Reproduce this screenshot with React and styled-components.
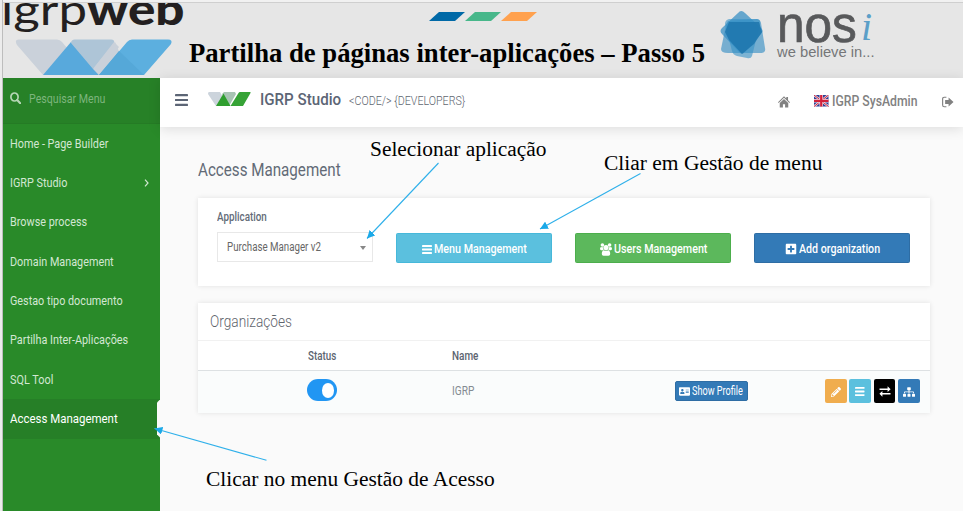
import React, { useLayoutEffect, useRef, useState } from "react";
import styled, { createGlobalStyle } from "styled-components";
import { FaPencilAlt, FaSitemap, FaPlusSquare, FaAddressCard } from "react-icons/fa";

const Global = createGlobalStyle`
  * { box-sizing: border-box; }
  html, body { margin: 0; padding: 0; overflow: hidden; }
  body { font-family: Roboto, "Liberation Sans", sans-serif; }
`;

/* ---------- text fitted to a given width ---------- */
const FitBox = styled.span`
  display: inline-block;
  flex: none;
  white-space: nowrap;
  width: ${(p) => p.$w}px;
`;
const FitInner = styled.span`
  display: inline-block;
  transform-origin: 0 50%;
`;
function Fit({ w, children }) {
  const ref = useRef(null);
  const [k, setK] = useState(1);
  useLayoutEffect(() => {
    setK(w / ref.current.offsetWidth);
  }, [w]);
  return (
    <FitBox $w={w}>
      <FitInner ref={ref} style={{ transform: `scaleX(${k})` }}>{children}</FitInner>
    </FitBox>
  );
}

/* ---------- frame ---------- */
const Frame = styled.div`
  position: relative;
  width: 963px;
  height: 511px;
  padding-left: 2px;
  background: #ececec;
  overflow: hidden;
`;
const Slide = styled.div`
  height: 511px;
  border-left: 1px solid #bdbdbd;
  padding-top: 2px;
  background: #f1f1f1;
`;

/* ---------- slide header ---------- */
const SlideHeader = styled.header`
  display: grid;
  grid-template-columns: 186px 531px 1fr;
  height: 76px;
  border-top: 1px solid #cfcfcf;
  background: #e6e6e6;
`;
const BrandColumn = styled.div`
  height: 75px;
  overflow: hidden;
`;
const Wordmark = styled.div`
  height: 36px;
  overflow: hidden;
  font-family: Lato, sans-serif;
  font-size: 43px;
  line-height: 42px;
  color: #231f20;
  white-space: nowrap;
`;
const WordmarkLine = styled.div`
  display: flex;
  margin: -15px 0 0 -2px;
`;
const Light = styled.span`
  font-weight: 400;
`;
const Heavy = styled.span`
  font-weight: 900;
`;
const BrandShape = styled.svg`
  display: block;
  margin-left: 12px;
`;
const TitleColumn = styled.div`
  display: flex;
  flex-direction: column;
`;
const Stripes = styled.svg`
  display: block;
  margin: 9px 0 0 240px;
`;
const SlideTitle = styled.h1`
  margin: 16px 0 0 0;
  font: bold 27px/32px "Liberation Serif", serif;
  color: #000;
`;
const Nosi = styled.div`
  display: flex;
`;
const NosiStar = styled.svg`
  margin: 7px 0 0 0;
  flex: none;
`;
const NosiText = styled.div`
  margin-left: 11px;
  color: #58595b;
  font-family: "Liberation Sans", sans-serif;
`;
const NosiName = styled.div`
  display: flex;
  height: 41px;
  font-size: 52px;
  line-height: 41px;
  padding-top: 1px;
  -webkit-text-stroke: 0.7px #58595b;
`;
const NosiI = styled.span`
  margin: 4px 0 0 4px;
  font: italic 40px/38px "Liberation Serif", serif;
  color: #5b9fc8;
  -webkit-text-stroke: 0;
`;
const Tagline = styled.div`
  font-size: 15.5px;
  line-height: 16px;
  color: #757678;
`;

/* ---------- application ---------- */
const AppBody = styled.div`
  display: grid;
  grid-template-columns: 157px 1fr;
  height: 433px;
`;
const Sidebar = styled.nav`
  background: #298a29;
  color: #d2e7d2;
  font-size: 13px;
`;
const Search = styled.div`
  display: flex;
  align-items: center;
  gap: 8px;
  height: 46px;
  padding: 0 0 5px 7px;
  background: #278127;
  color: #7db57d;
  border-bottom: 1px solid #257b25;
`;
const MenuItem = styled.div`
  display: flex;
  align-items: center;
  justify-content: space-between;
  height: 39.35px;
  padding: 0 11px 1px 7.2px;
  background: ${(p) => (p.$active ? "#267f27" : "transparent")};
  color: ${(p) => (p.$active ? "#fff" : "inherit")};
`;
const ActiveItem = styled(MenuItem)`
  padding-right: 0;
`;
const Notch = styled.span`
  width: 3px;
  height: 38px;
  background: #fafafa;
  clip-path: polygon(0 3px, 100% 0, 100% 100%, 0 calc(100% - 3px));
`;
const Main = styled.main`
  background: #fafafa;
`;
const Topbar = styled.header`
  display: flex;
  align-items: center;
  height: 49px;
  padding: 0 9.5px 5px 15px;
  background: #fff;
  box-shadow: 0 2px 12px rgba(0, 0, 0, 0.12);
  color: #777;
`;
const MenuToggle = styled.span`
  display: flex;
  margin-bottom: 1px;
`;
const AppLogo = styled.svg`
  margin: 0 0 2px 19.5px;
`;
const AppName = styled.div`
  margin: -2px 0 0 9px;
  font-size: 17px;
  font-weight: 500;
  color: #5c6575;
`;
const AppSub = styled.div`
  margin: 0 0 0 8px;
  font-size: 13px;
  font-weight: 300;
  color: #60666f;
`;
const TopRight = styled.div`
  display: flex;
  align-items: center;
  margin-left: auto;
  padding-top: 3px;
  color: #818181;
`;
const UserBox = styled.div`
  display: flex;
  align-items: center;
  gap: 3px;
  margin: -1px 25px 0 24.5px;
  font-size: 14px;
  font-weight: 500;
`;
const Content = styled.div`
  padding: 32px 33px 0 38.4px;
`;
const PageTitle = styled.h2`
  height: 39px;
  margin: 0;
  font-size: 17.5px;
  font-weight: 400;
  line-height: 22px;
  color: #626a76;
`;
const Card = styled.section`
  background: #fff;
  box-shadow: 0 0 5px rgba(0, 0, 0, 0.1);
`;
const FilterCard = styled(Card)`
  display: grid;
  grid-template-columns: repeat(4, 156px);
  column-gap: 23px;
  align-items: start;
  height: 88px;
  padding: 11px 19px 0;
`;
const Label = styled.div`
  height: 23px;
  padding-top: 1px;
  font-size: 12px;
  font-weight: 500;
  line-height: 15px;
  color: #636b78;
`;
const Select = styled.div`
  display: flex;
  align-items: center;
  justify-content: space-between;
  height: 29.5px;
  padding: 0 6px 0 9px;
  border: 1px solid #e8e8e8;
  font-size: 12px;
  color: #666;
`;
const Caret = styled.span`
  margin-top: 2px;
  border: 3px solid transparent;
  border-top: 4.5px solid #888;
  border-bottom: 0;
`;
const Action = styled.button`
  display: flex;
  align-items: center;
  justify-content: center;
  gap: 2.5px;
  height: 30px;
  margin-top: 24px;
  padding: 0;
  border: 1px solid ${(p) => p.$edge};
  border-radius: 1.5px;
  background: ${(p) => p.$bg};
  color: #fff;
  font: 500 13px Roboto, sans-serif;
`;
const ActionIcon = styled.span`
  display: flex;
  margin-top: 2px;
  font-size: 12px;
`;
const OrgCard = styled(Card)`
  height: 110px;
  margin-top: 17px;
`;
const OrgTitle = styled.div`
  height: 38px;
  padding: 7px 0 0 11.5px;
  border-bottom: 1px solid #f1f1f1;
  font-size: 17px;
  font-weight: 300;
  line-height: 22px;
  color: #5f656d;
`;
const Row = styled.div`
  display: grid;
  grid-template-columns: 253.6px 223px 150px 1fr;
  align-items: center;
`;
const HeadRow = styled(Row)`
  height: 30px;
  border-bottom: 1px solid #dde1e3;
  font-size: 12px;
  font-weight: 500;
  color: #5c6470;
`;
const DataRow = styled(Row)`
  height: 42px;
  padding-bottom: 2px;
  background: #fafcfc;
  font-size: 12px;
  color: #848b92;
`;
const StatusCell = styled.div`
  margin-top: ${(p) => p.$lift ?? 0}px;
  padding-left: ${(p) => p.$pad}px;
`;
const Toggle = styled.div`
  display: flex;
  align-items: center;
  justify-content: flex-end;
  width: 30.5px;
  height: 22px;
  padding-right: 3px;
  border-radius: 11px;
  background: #2196f3;
`;
const Knob = styled.span`
  width: 12.5px;
  height: 15px;
  border-radius: 50%;
  background: #fff;
`;
const Profile = styled.button`
  display: flex;
  align-items: center;
  gap: 2.5px;
  width: 73px;
  height: 20px;
  padding: 0 0 0 3px;
  border: 1px solid #2e6da4;
  border-radius: 2px;
  background: #337ab7;
  color: #fff;
  font: 12px Roboto, sans-serif;
`;
const Tools = styled.div`
  display: flex;
  gap: 2.8px;
`;
const Tool = styled.button`
  display: flex;
  align-items: center;
  justify-content: center;
  width: 21.6px;
  height: 24px;
  padding: 1px 0 0;
  border: 0;
  border-radius: 2px;
  background: ${(p) => p.$bg};
  color: #fff;
  font-size: 11px;
`;

/* ---------- slide annotations ---------- */
const Note = styled.div`
  position: absolute;
  left: ${(p) => p.$x}px;
  top: ${(p) => p.$y}px;
  font: 20.5px/24px "Liberation Serif", serif;
  color: #000;
`;
const Arrows = styled.svg`
  position: absolute;
  left: 0;
  top: 0;
  pointer-events: none;
`;

/* ---------- drawings ---------- */
const Bars = ({ w, h, t, color = "currentColor" }) => (
  <svg width={w} height={h} viewBox={`0 0 ${w} ${h}`} fill={color}>
    {[0, 1, 2].map((i) => (
      <rect key={i} y={(i * (h - t)) / 2} width={w} height={t} rx="0.4" />
    ))}
  </svg>
);
const SearchIcon = () => (
  <svg width="11" height="12" viewBox="0 0 11 12" fill="none" stroke="#b5d6b5">
    <ellipse cx="4.5" cy="5" rx="3.6" ry="4" strokeWidth="1.7" />
    <path d="M7.2 8 10.2 11.2" strokeWidth="2.1" strokeLinecap="round" />
  </svg>
);
const HomeIcon = () => (
  <svg width="12" height="12" viewBox="0 0 11 11" fill="currentColor">
    <path d="M5.5 0.3 7.6 2.4V1H9.2V3.9L11 5.7 10.4 6.4 5.5 1.7 0.6 6.4 0 5.7Z" />
    <path d="M5.5 2.7 9.4 6.4V10.6H6.5V7.5H4.5V10.6H1.6V6.4Z" />
  </svg>
);
const SignOut = () => (
  <svg width="11.5" height="12" viewBox="0 0 11 11" fill="currentColor">
    <path d="M4.2 1H2.1Q.6 1 .6 2.7V8.3Q.6 10 2.1 10H4.2" fill="none" stroke="currentColor" strokeWidth="1.1" />
    <path d="M3 3.6H6.3V1.1L11 5.5 6.3 9.9V7.4H3Z" />
  </svg>
);
const Flag = () => (
  <svg width="14.5" height="11.5" viewBox="0 0 29 23">
    <rect width="29" height="23" fill="#2c3f94" />
    <path d="M0 0 29 23M29 0 0 23" stroke="#e6d8e6" strokeWidth="4.4" />
    <path d="M0 0 29 23M29 0 0 23" stroke="#d2283c" strokeWidth="2" />
    <path d="M14.5 0V23M0 11.5H29" stroke="#f0e0ea" strokeWidth="7" />
    <path d="M14.5 0V23M0 11.5H29" stroke="#d2203a" strokeWidth="4.5" />
  </svg>
);
const UsersIcon = () => (
  <svg width="12" height="13" viewBox="0 0 12 13" fill="currentColor">
    <circle cx="2.4" cy="2" r="1.8" />
    <circle cx="9.6" cy="2" r="1.8" />
    <circle cx="6" cy="4.6" r="2.6" />
    <path d="M1.2 4Q2.2 4.5 3 4.1 2.8 6 3.8 7.2H1.2Q0 7.2 0 5.8 0 4 1.2 4ZM10.8 4Q9.8 4.5 9 4.1 9.2 6 8.2 7.2H10.8Q12 7.2 12 5.8 12 4 10.8 4Z" />
    <path d="M3.7 7.2Q6 8.2 8.3 7.2 10.2 7.7 10.2 11 10.2 12.8 8.5 12.8H3.5Q1.8 12.8 1.8 11 1.8 7.7 3.7 7.2Z" />
  </svg>
);
const Exchange = () => (
  <svg width="12" height="11" viewBox="0 0 12 11" fill="currentColor">
    <path d="M.5 2.5H8.6V.3L11.6 3.3 8.6 6.1V4.1H.5ZM11.5 7H3.4V4.9L.4 7.8 3.4 10.7V8.6H11.5Z" />
  </svg>
);

const menu = [
  ["Home - Page Builder", 98.5],
  ["IGRP Studio", 57.5],
  ["Browse process", 77.5],
  ["Domain Management", 104],
  ["Gestao tipo documento", 113],
  ["Partilha Inter-Aplicações", 118.5],
  ["SQL Tool", 43.5],
];
const arrowLines = [
  [438.5, 163, 367, 238.5],
  [640.5, 173.5, 540, 229],
  [266.5, 460.3, 154.5, 428.5],
];

export default function App() {
  return (
    <Frame>
      <Global />
      <Slide>
        <SlideHeader>
          <BrandColumn>
            <Wordmark>
              <WordmarkLine>
                <Fit w={85.5}><Light>igrp</Light></Fit>
                <Fit w={97.5}><Heavy>web</Heavy></Fit>
              </WordmarkLine>
            </Wordmark>
            <BrandShape width="158" height="36" viewBox="0 0 158 36">
              <path d="M4 .5H42Q45 .5 47 3L75 36H28L2 6Q-1 .5 4 .5Z" fill="#cad1da" />
              <path d="M114 36H84L76 29 100 3Z" fill="#cad1da" />
              <path d="M28 36 56 3 84 36Z" fill="#58a9dc" />
              <path d="M60 .5H96Q100 .5 99 4L78 30 56 4Q56 .5 60 .5Z" fill="#aec5d7" />
              <path d="M99 3 104 8 84 36 78 30Z" fill="#cad1da" />
              <path d="M84 36 112 3Q114 .5 117 .5H153Q158 .5 156 5L129 36Z" fill="#5cafdf" />
              <path d="M84 36 104 12 129 36Z" fill="#55a8d8" />
            </BrandShape>
          </BrandColumn>
          <TitleColumn>
            <Stripes width="108" height="9" viewBox="0 0 108 9">
              <path d="M10 0H36L26 9H0Z" fill="#0069a7" />
              <path d="M46 0H72L62 9H36Z" fill="#47b78a" />
              <path d="M82 0H108L98 9H72Z" fill="#ffa14e" />
            </Stripes>
            <SlideTitle><Fit w={515.5}>Partilha de páginas inter-aplicações – Passo 5</Fit></SlideTitle>
          </TitleColumn>
          <Nosi>
            <NosiStar width="46" height="49" viewBox="0 0 46 49">
              <path d="M18 3Q21 -1 25 3L41 18Q44 21 41 24L25 42Q22 45 19 42L2 24Q-1 21 2 18Z" fill="#4d9ac8" opacity=".85" />
              <path d="M8 11 37 9Q40 9 41 13L45 38Q46 42 42 43L8 43Q1 43 1 39L6 15Z" fill="#3a90c5" opacity=".65" />
              <path d="M9 9 37 9Q41 10 40 14L32 46Q31 49 27 48L17 46Q13 45 12 41L5 14Q5 10 9 9Z" fill="#3691c7" opacity=".6" />
              <path d="M9 12 39 12 42 22 34 34 22 44 9 30 5 22Z" fill="#1d76ad" opacity=".85" />
            </NosiStar>
            <NosiText>
              <NosiName>
                <Fit w={80}>nos</Fit>
                <NosiI>i</NosiI>
              </NosiName>
              <Tagline><Fit w={98}>we believe in...</Fit></Tagline>
            </NosiText>
          </Nosi>
        </SlideHeader>

        <AppBody>
          <Sidebar>
            <Search>
              <SearchIcon />
              <Fit w={76}>Pesquisar Menu</Fit>
            </Search>
            {menu.map(([label, w], i) => (
              <MenuItem key={label}>
                <Fit w={w}>{label}</Fit>
                {i === 1 && (
                  <svg width="5" height="8" viewBox="0 0 5 8" fill="none" stroke="#d2e7d2" strokeWidth="1.2">
                    <path d="M1 .7 4 4 1 7.3" />
                  </svg>
                )}
              </MenuItem>
            ))}
            <ActiveItem $active>
              <Fit w={107.5}>Access Management</Fit>
              <Notch />
            </ActiveItem>
          </Sidebar>

          <Main>
            <Topbar>
              <MenuToggle><Bars w={13} h={12} t={2.2} color="#5c6575" /></MenuToggle>
              <AppLogo width="43" height="14" viewBox="0 0 43 14">
                <path d="M1 0H12L20 14H8L0 2Q0 0 1 0Z" fill="#ccd4dc" />
                <path d="M16 0H27L28 2 21 14 14 2Z" fill="#a8c4b4" />
                <path d="M8 14 15.5 1.5 22.5 14Z" fill="#2f9e2f" />
                <path d="M22.5 14 30.5 1Q31 0 32 0H42Q43 0 42.5 1L35 14Z" fill="#36a336" />
              </AppLogo>
              <AppName><Fit w={81}>IGRP Studio</Fit></AppName>
              <AppSub><Fit w={116}>{"<CODE/> {DEVELOPERS}"}</Fit></AppSub>
              <TopRight>
                <HomeIcon />
                <UserBox>
                  <Flag />
                  <Fit w={85.5}>IGRP SysAdmin</Fit>
                </UserBox>
                <SignOut />
              </TopRight>
            </Topbar>
            <Content>
              <PageTitle><Fit w={143}>Access Management</Fit></PageTitle>
              <FilterCard>
                <div>
                  <Label><Fit w={50}>Application</Fit></Label>
                  <Select>
                    <Fit w={94}>Purchase Manager v2</Fit>
                    <Caret />
                  </Select>
                </div>
                <Action $bg="#5bc0de" $edge="#46b8da">
                  <ActionIcon><Bars w={10} h={9} t={2} /></ActionIcon>
                  <Fit w={93}>Menu Management</Fit>
                </Action>
                <Action $bg="#5cb85c" $edge="#4cae4c">
                  <ActionIcon><UsersIcon /></ActionIcon>
                  <Fit w={93}>Users Management</Fit>
                </Action>
                <Action $bg="#337ab7" $edge="#2e6da4">
                  <ActionIcon><FaPlusSquare /></ActionIcon>
                  <Fit w={81}>Add organization</Fit>
                </Action>
              </FilterCard>
              <OrgCard>
                <OrgTitle><Fit w={82}>Organizações</Fit></OrgTitle>
                <HeadRow>
                  <StatusCell $pad={109.6}><Fit w={28.5}>Status</Fit></StatusCell>
                  <Fit w={26.5}>Name</Fit>
                </HeadRow>
                <DataRow>
                  <StatusCell $pad={108.6} $lift={-2}><Toggle><Knob /></Toggle></StatusCell>
                  <Fit w={22}>IGRP</Fit>
                  <Profile>
                    <FaAddressCard size={11} />
                    <Fit w={51}>Show Profile</Fit>
                  </Profile>
                  <Tools>
                    <Tool $bg="#f0ad4e"><FaPencilAlt size={10} /></Tool>
                    <Tool $bg="#5bc0de"><Bars w={9.5} h={9} t={1.8} /></Tool>
                    <Tool $bg="#000"><Exchange /></Tool>
                    <Tool $bg="#337ab7"><FaSitemap size={12} /></Tool>
                  </Tools>
                </DataRow>
              </OrgCard>
            </Content>
          </Main>
        </AppBody>
      </Slide>

      <Note $x={370} $y={137}><Fit w={176.5}>Selecionar aplicação</Fit></Note>
      <Note $x={604} $y={151}><Fit w={218}>Cliar em Gestão de menu</Fit></Note>
      <Note $x={206} $y={467}><Fit w={288.5}>Clicar no menu Gestão de Acesso</Fit></Note>
      <Arrows width="963" height="511">
        <defs>
          <marker id="head" markerUnits="userSpaceOnUse" markerWidth="8" markerHeight="8" refX="8" refY="4" orient="auto">
            <path d="M0 0 8 4 0 8Z" fill="#1ba9e8" />
          </marker>
        </defs>
        {arrowLines.map(([x1, y1, x2, y2]) => (
          <line key={x1} x1={x1} y1={y1} x2={x2} y2={y2} stroke="#2fb0ea" strokeWidth="1.1" markerEnd="url(#head)" />
        ))}
      </Arrows>
    </Frame>
  );
}
